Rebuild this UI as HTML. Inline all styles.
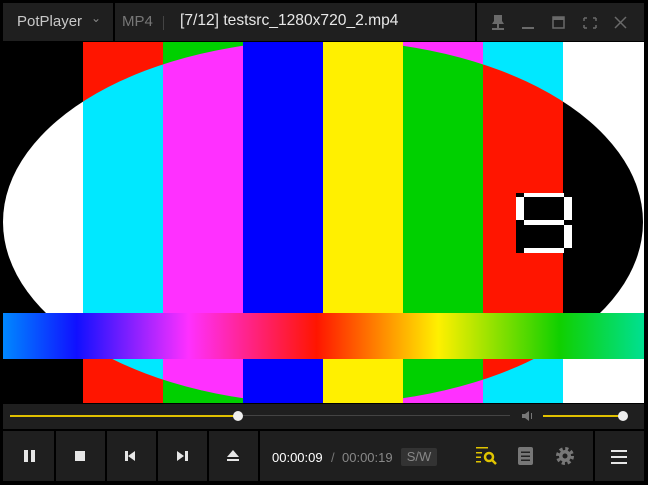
<!DOCTYPE html><html><head><style>
*{margin:0;padding:0;box-sizing:border-box}
body{width:648px;height:485px;background:#000;position:relative;overflow:hidden;font-family:"Liberation Sans",sans-serif}
.p{position:absolute;background:#1f1f1f}
.t{position:absolute;white-space:nowrap}
.d{position:absolute;background:#000;width:2px}
</style></head><body>
<div class="p" style="left:3px;top:3px;width:641px;height:38px"></div>
<div class="d" style="left:113px;top:3px;height:38px"></div>
<div class="d" style="left:475px;top:3px;height:38px"></div>
<div class="t" style="left:17px;top:13px;font-size:15px;color:#c8c8c8">PotPlayer</div>
<div class="t" style="left:91px;top:11px;font-size:12px;color:#888">⌄</div>
<div class="t" style="left:122px;top:13px;font-size:15px;color:#777">MP4</div>
<div style="position:absolute;left:163px;top:16px;width:1px;height:14px;background:#444"></div>
<div class="t" style="left:180px;top:12px;font-size:15.6px;color:#e8e8e8">[7/12] testsrc_1280x720_2.mp4</div>
<svg style="position:absolute;left:485px;top:10px" width="150" height="26" viewBox="0 0 150 26">
<g fill="#6a6a6a"><path d="M9 5h8v6l2 3H7l2-3z"/><rect x="12" y="14" width="2" height="4"/><rect x="7" y="18" width="12" height="2"/>
<rect x="37" y="17" width="12" height="2"/></g>
<rect x="68" y="7" width="11" height="11" fill="none" stroke="#6a6a6a" stroke-width="1.5"/><rect x="68" y="7" width="11" height="3" fill="#6a6a6a"/>
<path d="M99 8h3M99 8v3M111 8h-3M111 8v3M99 18h3M99 18v-3M111 18h-3M111 18v-3" stroke="#6a6a6a" stroke-width="1.5" fill="none"/>
<path d="M130 7l11 11M141 7l-11 11" stroke="#6a6a6a" stroke-width="1.5"/></svg>

<svg style="position:absolute;left:3px;top:42px" width="641" height="361" viewBox="3 42 641 361">
<defs><clipPath id="c"><ellipse cx="323" cy="222" rx="320" ry="182"/></clipPath>
<linearGradient id="g" x1="3" x2="643" gradientUnits="userSpaceOnUse">
<stop offset="0" stop-color="#0088ff"/><stop offset=".115" stop-color="#1010ff"/><stop offset=".29" stop-color="#ff30ff"/><stop offset=".49" stop-color="#ff1500"/><stop offset=".68" stop-color="#fff000"/><stop offset=".87" stop-color="#10d000"/><stop offset="1" stop-color="#00e090"/></linearGradient></defs>
<g><rect x="3" y="42" width="80" height="361" fill="#000"/><rect x="83" y="42" width="80" height="361" fill="#ff1500"/><rect x="163" y="42" width="80" height="361" fill="#00d000"/><rect x="243" y="42" width="80" height="361" fill="#0000ff"/><rect x="323" y="42" width="80" height="361" fill="#fff000"/><rect x="403" y="42" width="80" height="361" fill="#ff30ff"/><rect x="483" y="42" width="80" height="361" fill="#00e8ff"/><rect x="563" y="42" width="81" height="361" fill="#fff"/></g>
<g clip-path="url(#c)"><rect x="3" y="42" width="80" height="361" fill="#fff"/><rect x="83" y="42" width="80" height="361" fill="#00e8ff"/><rect x="163" y="42" width="80" height="361" fill="#ff30ff"/><rect x="243" y="42" width="80" height="361" fill="#0000ff"/><rect x="323" y="42" width="80" height="361" fill="#fff000"/><rect x="403" y="42" width="80" height="361" fill="#00d000"/><rect x="483" y="42" width="80" height="361" fill="#ff1500"/><rect x="563" y="42" width="81" height="361" fill="#000"/></g>
<rect x="516" y="193" width="56" height="60" fill="#000"/>
<g fill="#fff"><rect x="524" y="193" width="40" height="4"/><rect x="516" y="197" width="8" height="23"/><rect x="564" y="197" width="8" height="23"/><rect x="524" y="220" width="40" height="5"/><rect x="564" y="225" width="8" height="23"/><rect x="524" y="248" width="40" height="5"/></g>
<rect x="3" y="313" width="641" height="46" fill="url(#g)"/>
</svg>

<div class="p" style="left:3px;top:404px;width:641px;height:25px"></div>
<div style="position:absolute;left:10px;top:415px;width:228px;height:2px;background:#e0c000"></div>
<div style="position:absolute;left:238px;top:415px;width:272px;height:1px;background:#444"></div>
<div style="position:absolute;left:233px;top:411px;width:10px;height:10px;border-radius:50%;background:#eee"></div>
<svg style="position:absolute;left:520px;top:409px" width="16" height="14"><path d="M2 5h3l4-3v10l-4-3H2z" fill="#777"/><rect x="11" y="4" width="1" height="6" fill="#777"/></svg>
<div style="position:absolute;left:543px;top:415px;width:80px;height:2px;background:#e0c000"></div>
<div style="position:absolute;left:618px;top:411px;width:10px;height:10px;border-radius:50%;background:#eee"></div>

<div class="p" style="left:3px;top:431px;width:641px;height:50px"></div>
<div class="d" style="left:54px;top:431px;height:50px"></div>
<div class="d" style="left:105px;top:431px;height:50px"></div>
<div class="d" style="left:156px;top:431px;height:50px"></div>
<div class="d" style="left:207px;top:431px;height:50px"></div>
<div class="d" style="left:258px;top:431px;height:50px"></div>
<div class="d" style="left:593px;top:431px;height:50px"></div>
<svg style="position:absolute;left:0;top:431px" width="648" height="50">
<g fill="#e6e6e6"><rect x="24" y="19" width="4" height="12"/><rect x="31" y="19" width="4" height="12"/>
<rect x="75" y="20" width="10" height="10"/>
<rect x="125" y="20" width="3" height="10"/><path d="M135 20v10l-7-5z"/>
<rect x="185" y="20" width="3" height="10"/><path d="M177 20v10l7-5z"/>
<path d="M227 26h12l-6-7z"/><rect x="227" y="28" width="12" height="2"/>
<rect x="611" y="19" width="16" height="2"/><rect x="611" y="25" width="16" height="2"/><rect x="611" y="31" width="16" height="2"/></g>
<g fill="#e0c400"><rect x="476" y="16" width="12" height="1.5"/><rect x="476" y="21" width="6" height="1.5"/><rect x="476" y="25.5" width="5" height="1.5"/><rect x="476" y="30" width="5" height="1.5"/></g>
<circle cx="489" cy="26" r="4" fill="none" stroke="#e0c400" stroke-width="2.5"/><path d="M492 29l4 4" stroke="#e0c400" stroke-width="2.5"/>
<rect x="518" y="16" width="15" height="18" rx="2" fill="#777"/><g fill="#222"><rect x="521" y="20.5" width="9" height="1.5"/><rect x="521" y="24.5" width="9" height="1.5"/><rect x="521" y="28.5" width="9" height="1.5"/></g>
<circle cx="565" cy="25" r="7" fill="none" stroke="#777" stroke-width="4" stroke-dasharray="3 2.5"/><circle cx="565" cy="25" r="6" fill="#777"/><circle cx="565" cy="25" r="2.5" fill="#1f1f1f"/>
</svg>
<div class="t" style="left:272px;top:450px;font-size:13px;color:#fff">00:00:09</div>
<div class="t" style="left:331px;top:450px;font-size:13px;color:#777">/</div>
<div class="t" style="left:342px;top:450px;font-size:13px;color:#888">00:00:19</div>
<div class="t" style="left:401px;top:448px;width:36px;height:18px;background:#333;border-radius:2px;font-size:13px;color:#888;text-align:center;line-height:18px">S/W</div>
</body></html>
